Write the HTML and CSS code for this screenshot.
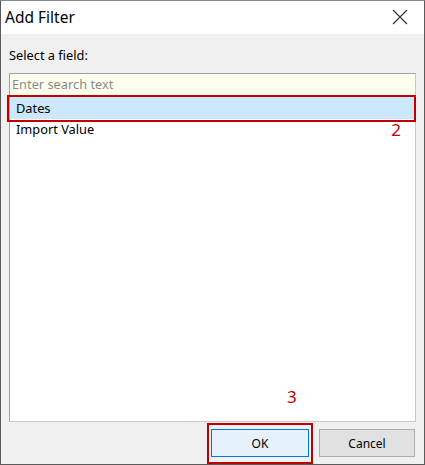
FILE: index.html
```html
<!DOCTYPE html>
<html>
<head>
<meta charset="utf-8">
<link rel="stylesheet" href="styles.css">
</head>
<body>
<div class="window">
  <div class="titlebar">
    <span class="title">Add Filter</span>
    <svg class="close" width="16" height="16" viewBox="0 0 16 16"><path d="M1 1 L15 15 M15 1 L1 15" stroke="#333" stroke-width="1.2" fill="none"/></svg>
  </div>
  <div class="content">
    <div class="label">Select a field:</div>
    <div class="list">
      <div class="search">Enter search text</div>
      <div class="row selected">Dates</div>
      <div class="row">Import Value</div>
      <span class="mark"></span>
      <span class="note note2">2</span>
      <span class="note note3">3</span>
    </div>
    <div class="buttons">
      <div class="btn-wrap"><button class="btn primary">OK</button></div>
      <button class="btn">Cancel</button>
    </div>
  </div>
</div>
</body>
</html>
```
FILE: styles.css
```css
* { box-sizing: border-box; }
html, body { margin: 0; padding: 0; background: #fff; }
.window {
  width: 425px; height: 465px;
  border: 1px solid #5a5a5a;
  border-top-color: #8a8a8a;
  display: flex; flex-direction: column;
  font-family: "Noto Sans", "Open Sans", sans-serif;
  font-size: 12.8px;
  color: #000;
}
.titlebar {
  height: 33px; background: #fff;
  display: flex; align-items: center; justify-content: space-between;
  padding: 0 16px 2px 4px;
}
.title { font-size: 15.5px; color: #000; }
.close { display: block; }
.content {
  flex: 1; background: #f0f0f0;
  padding: 12px 8px 0 8px;
  display: flex; flex-direction: column;
}
.label { height: 27px; line-height: 18px; }
.list {
  position: relative;
  height: 349px;
  background: #fff;
  border: 1px solid #a0a0a0;
  border-right-color: #c8c8c8;
  border-bottom-color: #c8c8c8;
}
.search {
  height: 22px; line-height: 21px;
  background: #fffff0;
  border-bottom: 1px solid #c8c8c8;
  padding-left: 2px;
  color: #8a8a8a;
}
.row { height: 20px; line-height: 20px; padding-left: 6px; }
.row.selected {
  background: #cce8ff;
  height: 23px; line-height: 24px;
}
.mark {
  position: absolute;
  left: -3px; top: 21px;
  width: 409px; height: 27px;
  border: 2px solid #c00000;
}
.note {
  position: absolute;
  color: #c00000;
  font-size: 17px;
  font-family: "Noto Sans", sans-serif;
}
.note2 { right: 14px; top: 44px; }
.note3 { left: 277px; top: 311px; }
.buttons {
  flex: 1;
  display: flex; justify-content: flex-end; align-items: flex-start;
  padding-top: 1px; padding-right: 1px; gap: 6px;
}
.btn-wrap {
  border: 2px solid #c00000;
  padding: 4px 2px 5px 2px;
}
.btn {
  font-family: "Noto Sans", "Open Sans", sans-serif;
  font-size: 12px;
  width: 96px; height: 28px;
  background: #e1e1e1;
  border: 1px solid #adadad;
  margin: 6px 0 0 0;
  padding: 0;
  color: #000;
}
.btn.primary {
  background: #e5f1fb;
  border-color: #0078d7;
  width: 98px;
  margin: 0;
}
```
